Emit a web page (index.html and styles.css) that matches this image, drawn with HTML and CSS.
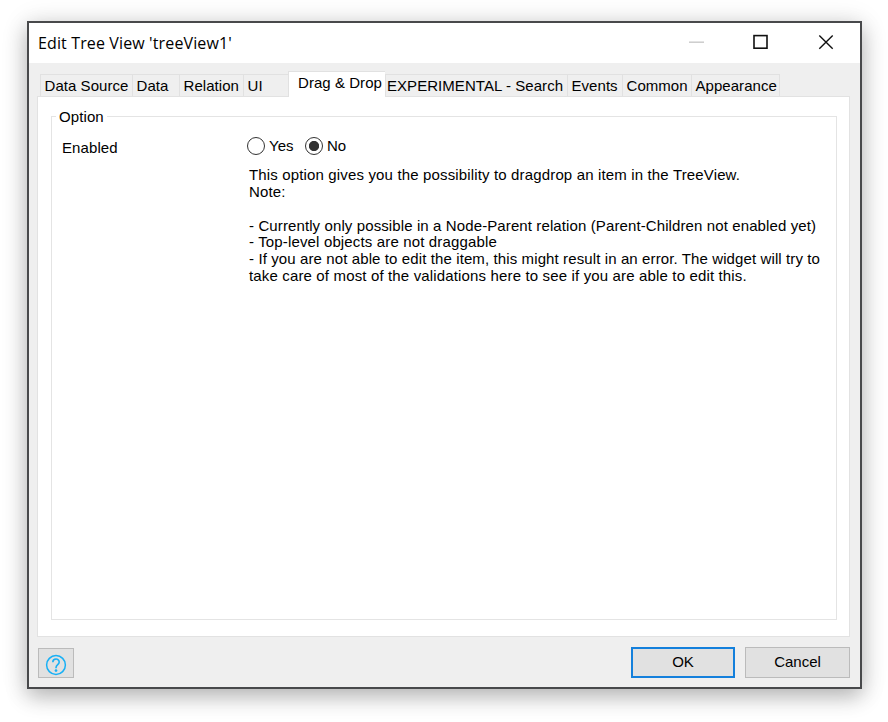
FILE: index.html
```html
<!DOCTYPE html>
<html lang="en">
<head>
<meta charset="utf-8">
<title>Edit Tree View</title>
<link rel="stylesheet" href="styles.css">
</head>
<body>
<main class="window">
  <header class="titlebar">
    <h1 class="title">Edit Tree View 'treeView1'</h1>
    <svg class="controls" width="160" height="20" viewBox="0 0 160 20" fill="none">
      <path d="M8 10.2h15" stroke="#ccc" stroke-width="1.5"/>
      <rect x="73" y="3.6" width="13" height="12.6" stroke="#111" stroke-width="1.6"/>
      <path d="M138.300 3.500l13.400 13.200M151.700 3.500l-13.400 13.200" stroke="#111" stroke-width="1.4"/>
    </svg>
  </header>
  <div class="content">
    <nav class="tabs">
      <span class="tab source">Data Source</span>
      <span class="tab data">Data</span>
      <span class="tab relation">Relation</span>
      <span class="tab ui">UI</span>
      <span class="tab active">Drag &amp; Drop</span>
      <span class="tab search">EXPERIMENTAL - Search</span>
      <span class="tab events">Events</span>
      <span class="tab common">Common</span>
      <span class="tab appearance">Appearance</span>
    </nav>
    <section class="panel">
      <fieldset class="group">
        <legend>Option</legend>
        <div class="row">
          <span class="label">Enabled</span>
          <div class="value">
            <div class="radios">
              <span class="radio"></span><span class="choice yes">Yes</span>
              <span class="radio checked"></span><span class="choice">No</span>
            </div>
            <p class="note">
              <span>This option gives you the possibility to dragdrop an item in the TreeView.</span>
              <span>Note:</span>
              <span>&nbsp;</span>
              <span class="wide">- Currently only possible in a Node-Parent relation (Parent-Children not enabled yet)</span>
              <span>- Top-level objects are not draggable</span>
              <span class="wide">- If you are not able to edit the item, this might result in an error. The widget will try to</span>
              <span>take care of most of the validations here to see if you are able to edit this.</span>
            </p>
          </div>
        </div>
      </fieldset>
    </section>
    <footer class="footer">
      <span class="help">
        <svg width="22" height="22" viewBox="0 0 22 22" fill="none" stroke="#18b0f5">
          <circle cx="11" cy="11" r="9.400" stroke-width="1.500"/>
          <path d="M7.800 8.300c0-4.300 6.400-4.200 6.400-.3 0 2.700-3.200 2.700-3.200 5.700v.6" stroke-width="1.600"/>
          <circle cx="11" cy="16.600" r="1.100" fill="#18b0f5" stroke-width=".6"/>
        </svg>
      </span>
      <span class="button primary">OK</span>
      <span class="button">Cancel</span>
    </footer>
  </div>
</main>
</body>
</html>
```

FILE: styles.css
```css
* { box-sizing: border-box; }
body {
  margin: 0;
  height: 722px;
  padding: 21px 26px 0 27px;
  overflow: hidden;
  background: #fff;
  color: #000;
  font: 15px/17px "Liberation Sans", Arial, sans-serif;
}
.window {
  height: 668px;
  border: 2px solid #48494b;
  background: #efefef;
  box-shadow: 0 8px 20px rgba(0, 0, 0, .23), 0 2px 26px rgba(0, 0, 0, .12);
}
.titlebar {
  display: flex;
  justify-content: space-between;
  height: 40px;
  padding: 9px 19px 0 9px;
  background: #fff;
}
.title {
  margin: 0;
  font: 400 16px/22px "Open Sans", "Segoe UI", sans-serif;
  letter-spacing: .13px;
  white-space: nowrap;
}
.content { padding: 8px 10px 0 8px; }
.tabs {
  display: flex;
  align-items: flex-end;
  height: 25px;
  padding-left: 3px;
}
.tab {
  height: 22px;
  padding: 2px 0 0 3.500px;
  border: 1px solid #e1e1e1;
  border-width: 1px 0 0 1px;
  letter-spacing: .05px;
  white-space: nowrap;
}
.source { width: 92px; }
.data { width: 47px; }
.relation { width: 64px; }
.ui { width: 45px; }
.tab.active {
  width: 97px;
  height: 26px;
  padding: 2px 0 0 9px;
  margin-bottom: -1px;
  background: #fff;
}
.tab.search { width: 182px; padding-left: 1px; }
.events { width: 55px; }
.common { width: 69px; }
.appearance { width: 89px; border-right-width: 1px; }
.panel {
  height: 541px;
  padding: 11px 12px 0 13px;
  border: 1px solid #e2e2e2;
  background: #fff;
}
.group {
  height: 512px;
  min-width: 0;
  margin: 0;
  padding: 0 0 0 10px;
  border: 1px solid #e4e4e4;
}
legend { margin-left: -6px; padding: 0 3px; letter-spacing: .1px; }
.row { display: flex; padding-top: 11px; }
.label { width: 185px; padding-top: 3px; letter-spacing: .1px; }
.radios { display: flex; align-items: center; height: 19px; }
.radio {
  width: 18px;
  height: 18px;
  border: 1.5px solid #333;
  border-radius: 50%;
}
.checked { background: radial-gradient(circle, #333 0 4.7px, transparent 5.5px); }
.choice { margin-left: 4px; }
.yes { width: 36px; }
.note { margin: 12px 0 0 2px; line-height: 16.850px; letter-spacing: .15px; }
.note span { display: block; white-space: nowrap; }
.note .wide { letter-spacing: .11px; }
.footer { display: flex; padding-top: 10px; }
.help {
  width: 36px;
  height: 30px;
  margin: 1px auto 0 1px;
  padding: 5px 0 0 5.500px;
  border: 1px solid #bbb;
  background: #e1e1e1;
}
.help svg { display: block; }
.button {
  width: 105px;
  height: 31px;
  border: 1px solid #bbb;
  background: #e1e1e1;
  line-height: 28px;
  text-align: center;
}
.primary { margin-right: 10px; border: 2px solid #1480dc; line-height: 26px; }
.primary { width: 104px; }
```
